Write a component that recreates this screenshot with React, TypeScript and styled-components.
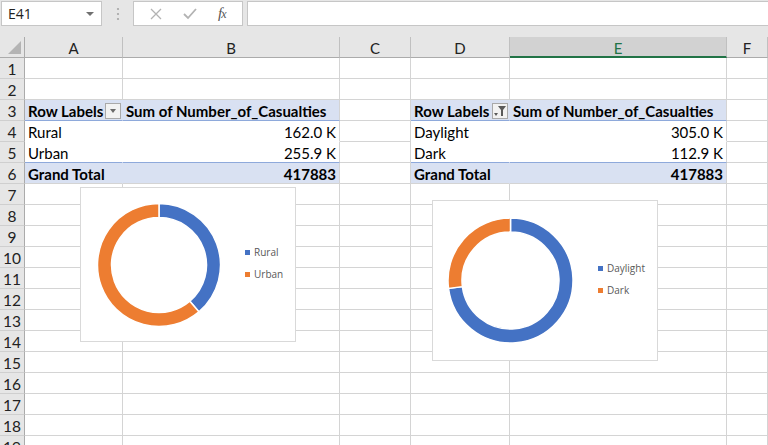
import React from 'react';
import styled, { createGlobalStyle } from 'styled-components';

const COLS = [25, 98, 217, 71, 99, 217, 41];
const LETTERS = ['A', 'B', 'C', 'D', 'E', 'F'];
const ROW_COUNT = 19;
const GRID = '#d4d4d4';
const HEAD_LINE = '#ababab';
const BAND = '#d9e1f2';
const BAND_LINE = '#8ea9db';
const BLUE = '#4472c4';
const ORANGE = '#ed7d31';

type Band = 'head' | 'body' | 'total' | undefined;

interface PivotRow {
  label: string;
  value: string;
  band: Band;
  button?: 'sort' | 'filter';
}

const pivotLeft: PivotRow[] = [
  { label: 'Row Labels', value: 'Sum of Number_of_Casualties', band: 'head', button: 'sort' },
  { label: 'Rural', value: '162.0 K', band: 'body' },
  { label: 'Urban', value: '255.9 K', band: 'body' },
  { label: 'Grand Total', value: '417883', band: 'total' },
];

const pivotRight: PivotRow[] = [
  { label: 'Row Labels', value: 'Sum of Number_of_Casualties', band: 'head', button: 'filter' },
  { label: 'Daylight', value: '305.0 K', band: 'body' },
  { label: 'Dark', value: '112.9 K', band: 'body' },
  { label: 'Grand Total', value: '417883', band: 'total' },
];

const GlobalStyle = createGlobalStyle`
  html, body {
    margin: 0;
    padding: 0;
    background: #fff;
    overflow: hidden;
  }
  * {
    box-sizing: border-box;
  }
`;

const Page = styled.div`
  width: 768px;
  height: 445px;
  overflow: hidden;
  background: #fff;
  font-family: Lato, 'Liberation Sans', sans-serif;
`;

// ---------- formula bar ----------

const FormulaBar = styled.div`
  height: 37px;
  background: #e6e6e6;
  display: flex;
  align-items: flex-start;
  padding: 1px 0 0 1px;
`;

const NameBox = styled.div`
  width: 101px;
  height: 25px;
  background: #fff;
  border: 1px solid #c6c6c6;
  display: flex;
  align-items: center;
  justify-content: space-between;
  padding: 0 7px 0 6px;
  font-family: 'Open Sans', 'Liberation Sans', sans-serif;
  font-size: 14px;
  color: #222;
`;

const DropArrow = styled.span`
  width: 0;
  height: 0;
  border-left: 4px solid transparent;
  border-right: 4px solid transparent;
  border-top: 4px solid #707070;
`;

const Grip = styled.div`
  width: 31px;
  height: 25px;
  display: flex;
  align-items: center;
  justify-content: center;
`;

const ButtonBox = styled.div`
  width: 110px;
  height: 25px;
  background: #fff;
  border: 1px solid #c6c6c6;
  display: flex;
  align-items: center;
  justify-content: space-around;
  padding: 0 6px;
`;

const Fx = styled.span`
  font-family: 'Liberation Serif', serif;
  font-style: italic;
  font-size: 15px;
  color: #555;
  letter-spacing: -1px;

  small {
    font-size: 12px;
  }
`;

const FormulaInput = styled.div`
  flex: 1;
  height: 25px;
  margin-left: 4px;
  background: #fff;
  border: 1px solid #c6c6c6;
  border-right: none;
`;

// ---------- sheet ----------

const Sheet = styled.div`
  position: relative;
  display: grid;
  grid-template-columns: ${COLS.map((c) => `${c}px`).join(' ')};
  grid-auto-rows: 21px;
`;

const Corner = styled.div`
  position: relative;
  background: #e6e6e6;
  border-right: 1px solid ${HEAD_LINE};
  border-bottom: 1px solid ${HEAD_LINE};

  &::after {
    content: '';
    position: absolute;
    right: 3px;
    bottom: 3px;
    border-left: 13px solid transparent;
    border-bottom: 13px solid #b4b4b4;
  }
`;

const ColHead = styled.div<{ $active?: boolean }>`
  background: ${(p) => (p.$active ? '#d2d2d2' : '#e6e6e6')};
  border-right: 1px solid #c0c0c0;
  border-bottom: ${(p) => (p.$active ? '2px solid #217346' : `1px solid ${HEAD_LINE}`)};
  color: ${(p) => (p.$active ? '#217346' : '#222')};
  font-size: 15px;
  display: flex;
  align-items: center;
  justify-content: center;
  padding-top: 2px;
`;

const RowHead = styled.div`
  background: #e6e6e6;
  border-right: 1px solid ${HEAD_LINE};
  border-bottom: 1px solid #cfcfcf;
  color: #222;
  font-size: 15.5px;
  display: flex;
  align-items: center;
  justify-content: center;
  padding-top: 1px;
`;

const Cell = styled.div<{ $band?: Band; $align?: 'left' | 'right'; $joinRight?: boolean; $bottom?: string }>`
  background: ${(p) => (p.$band === 'head' || p.$band === 'total' ? BAND : '#fff')};
  border-right: 1px solid
    ${(p) => (p.$joinRight ? (p.$band === 'head' || p.$band === 'total' ? BAND : '#fff') : GRID)};
  border-bottom: 1px solid ${(p) => p.$bottom || GRID};
  font-size: 15px;
  font-weight: ${(p) => (p.$band === 'head' || p.$band === 'total' ? 700 : 400)};
  color: #000;
  display: flex;
  align-items: center;
  justify-content: ${(p) => (p.$align === 'right' ? 'flex-end' : 'flex-start')};
  padding: 1px 3px 0 3px;
  white-space: nowrap;
  overflow: visible;
`;

const PivotButton = styled.span`
  margin-left: auto;
  margin-right: -2px;
  width: 16px;
  height: 16px;
  border: 1px solid #a9a9a9;
  background: #f2f2f2;
  display: flex;
  align-items: center;
  justify-content: center;
`;

// ---------- charts ----------

const Chart = styled.div<{ $left: number; $top: number; $w: number; $h: number }>`
  position: absolute;
  left: ${(p) => p.$left}px;
  top: ${(p) => p.$top}px;
  width: ${(p) => p.$w}px;
  height: ${(p) => p.$h}px;
  background: #fff;
  border: 1px solid #d9d9d9;
  display: flex;
  align-items: center;
`;

const Legend = styled.div<{ $gap: number }>`
  display: flex;
  flex-direction: column;
  gap: 8px;
  margin-left: ${(p) => p.$gap}px;
  margin-bottom: 3px;
`;

const LegendItem = styled.div`
  display: flex;
  align-items: center;
  gap: 4px;
  font-family: 'Open Sans', 'Liberation Sans', sans-serif;
  font-size: 10px;
  line-height: 14px;
  color: #595959;
`;

const Swatch = styled.span<{ $color: string }>`
  width: 5px;
  height: 5px;
  background: ${(p) => p.$color};
`;

const pt = (cx: number, cy: number, r: number, deg: number) => {
  const a = (deg * Math.PI) / 180;
  return `${(cx + r * Math.sin(a)).toFixed(2)} ${(cy - r * Math.cos(a)).toFixed(2)}`;
};

const slice = (cx: number, cy: number, ro: number, ri: number, a0: number, a1: number) => {
  const large = a1 - a0 > 180 ? 1 : 0;
  return [
    `M ${pt(cx, cy, ro, a0)}`,
    `A ${ro} ${ro} 0 ${large} 1 ${pt(cx, cy, ro, a1)}`,
    `L ${pt(cx, cy, ri, a1)}`,
    `A ${ri} ${ri} 0 ${large} 0 ${pt(cx, cy, ri, a0)}`,
    'Z',
  ].join(' ');
};

interface DonutProps {
  width: number;
  height: number;
  cx: number;
  cy: number;
  ro: number;
  ri: number;
  first: number;
}

const Donut: React.FC<DonutProps> = ({ width, height, cx, cy, ro, ri, first }) => {
  const split = first * 360;
  return (
    <svg width={width} height={height} style={{ flexShrink: 0 }}>
      <path d={slice(cx, cy, ro, ri, 0, split)} fill={BLUE} stroke="#fff" strokeWidth={1.5} />
      <path d={slice(cx, cy, ro, ri, split, 360)} fill={ORANGE} stroke="#fff" strokeWidth={1.5} />
    </svg>
  );
};

const SortIcon = () => (
  <svg width="10" height="8" viewBox="0 0 10 8">
    <path d="M2 2 L8 2 L5 6 Z" fill="#6a6a6a" />
  </svg>
);

const FilterIcon = () => (
  <svg width="14" height="12" viewBox="0 0 14 12">
    <path d="M1 8 L5 8 L3 11 Z" fill="#5a5a5a" />
    <path d="M5 1 L13 1 L10 5 L10 11 L8 11 L8 5 Z" fill="#5a5a5a" />
  </svg>
);

const pivotCells = (row: PivotRow, index: number, prefix: string) => {
  const bottom =
    row.band === 'head' || index === 2 ? BAND_LINE : row.band === 'body' ? '#fff' : undefined;
  return [
    <Cell key={`${prefix}a`} $band={row.band} $joinRight $bottom={bottom}>
      {row.label}
      {row.button && <PivotButton>{row.button === 'sort' ? <SortIcon /> : <FilterIcon />}</PivotButton>}
    </Cell>,
    <Cell key={`${prefix}b`} $band={row.band} $align={row.band === 'head' ? 'left' : 'right'} $bottom={bottom}>
      {row.value}
    </Cell>,
  ];
};

const App: React.FC = () => {
  const rows = [];
  for (let r = 1; r <= ROW_COUNT; r++) {
    const pivotIndex = r - 3;
    const inPivot = pivotIndex >= 0 && pivotIndex < 4;
    rows.push(<RowHead key={`h${r}`}>{r}</RowHead>);
    if (inPivot) {
      rows.push(...pivotCells(pivotLeft[pivotIndex], pivotIndex, `l${r}`));
      rows.push(<Cell key={`c${r}`} />);
      rows.push(...pivotCells(pivotRight[pivotIndex], pivotIndex, `r${r}`));
      rows.push(<Cell key={`f${r}`} />);
    } else {
      LETTERS.forEach((l) => rows.push(<Cell key={`${l}${r}`} />));
    }
  }

  return (
    <Page>
      <GlobalStyle />
      <FormulaBar>
        <NameBox>
          E41
          <DropArrow />
        </NameBox>
        <Grip>
          <svg width="4" height="14" viewBox="0 0 4 14">
            <circle cx="2" cy="2" r="1.1" fill="#a6a6a6" />
            <circle cx="2" cy="7" r="1.1" fill="#a6a6a6" />
            <circle cx="2" cy="12" r="1.1" fill="#a6a6a6" />
          </svg>
        </Grip>
        <ButtonBox>
          <svg width="12" height="12" viewBox="0 0 12 12">
            <path d="M1 1 L11 11 M11 1 L1 11" stroke="#b3b3b3" strokeWidth="1.3" />
          </svg>
          <svg width="14" height="12" viewBox="0 0 14 12">
            <path d="M1 6 L5 10 L13 1" stroke="#b3b3b3" strokeWidth="1.8" fill="none" />
          </svg>
          <Fx>
            f<small>x</small>
          </Fx>
        </ButtonBox>
        <FormulaInput />
      </FormulaBar>

      <Sheet>
        <Corner />
        {LETTERS.map((l) => (
          <ColHead key={l} $active={l === 'E'}>
            {l}
          </ColHead>
        ))}
        {rows}

        <Chart $left={80} $top={150} $w={216} $h={155}>
          <Donut width={156} height={153} cx={78} cy={77} ro={61.5} ri={47.5} first={162.0 / 417.883} />
          <Legend $gap={8}>
            <LegendItem>
              <Swatch $color={BLUE} />
              Rural
            </LegendItem>
            <LegendItem>
              <Swatch $color={ORANGE} />
              Urban
            </LegendItem>
          </Legend>
        </Chart>

        <Chart $left={432} $top={163} $w={226} $h={161}>
          <Donut width={155} height={159} cx={77.5} cy={79.5} ro={62.5} ri={48.5} first={305.0 / 417.883} />
          <Legend $gap={10}>
            <LegendItem>
              <Swatch $color={BLUE} />
              Daylight
            </LegendItem>
            <LegendItem>
              <Swatch $color={ORANGE} />
              Dark
            </LegendItem>
          </Legend>
        </Chart>
      </Sheet>
    </Page>
  );
};

export default App;
